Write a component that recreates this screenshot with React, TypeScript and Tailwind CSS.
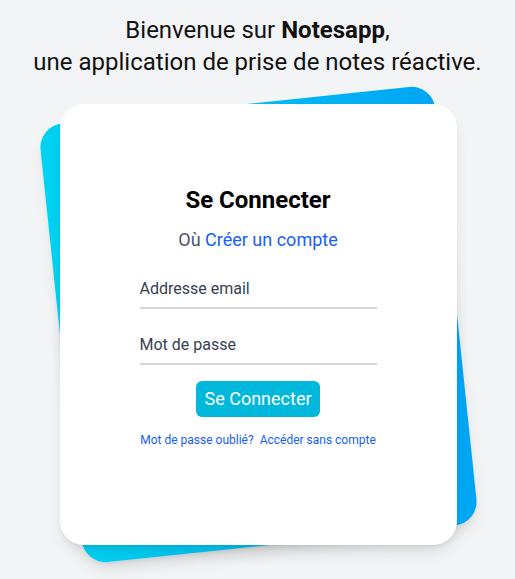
export default function App() {
  return (
    <div className="min-h-screen bg-gray-100 flex flex-col items-center font-['Roboto',sans-serif] text-black">
      <h1 className="mt-[14px] text-2xl leading-8 text-center text-[#111]">
        Bienvenue sur <b className="font-bold">Notesapp</b>,
        <br />
        une application de prise de notes réactive.
      </h1>
      <div className="relative mt-[26px] ml-[1px]">
        <div className="absolute inset-0 bg-linear-to-r from-cyan-400 to-sky-500 shadow-lg -rotate-6 rounded-3xl" />
        <div className="relative bg-white shadow-lg rounded-3xl w-[397px] h-[441px] px-20 pt-20 flex flex-col">
          <h2 className="text-2xl leading-8 font-bold text-center text-black">Se Connecter</h2>
          <p className="mt-2.5 text-lg leading-7 text-center text-gray-600">
            Où <a href="#" className="text-blue-600">Créer un compte</a>
          </p>
          <input
            type="email"
            placeholder="Addresse email"
            className="mt-[15px] h-10 w-full border-b-2 border-gray-300 text-base text-gray-900 placeholder:text-gray-700 outline-none bg-transparent"
          />
          <input
            type="password"
            placeholder="Mot de passe"
            className="mt-4 h-10 w-full border-b-2 border-gray-300 text-base text-gray-900 placeholder:text-gray-700 outline-none bg-transparent"
          />
          <div className="mt-4 flex justify-center">
            <button className="h-9 px-2 rounded-md bg-cyan-500 text-white text-lg">Se Connecter</button>
          </div>
          <div className="mt-[15px] flex justify-center gap-[6px] text-xs leading-4 text-blue-600">
            <a href="#">Mot de passe oublié?</a>
            <a href="#">Accéder sans compte</a>
          </div>
        </div>
      </div>
    </div>
  );
}
